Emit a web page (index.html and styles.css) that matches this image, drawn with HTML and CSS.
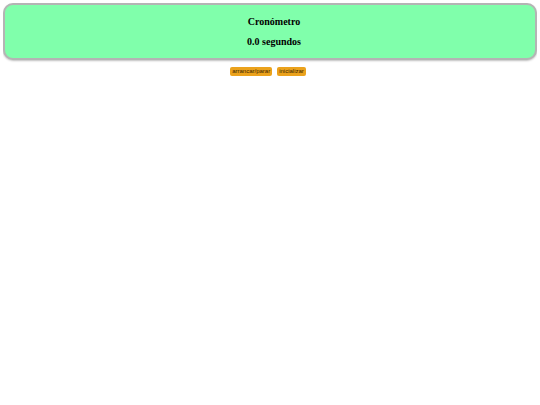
FILE: index.html
```html
<!DOCTYPE html>
<html lang="es">
<head>
  <meta charset="UTF-8">
  <title>Cronómetro</title>
  <link rel="stylesheet" href="styles.css">
</head>
<body>
  <div class="panel">
    <h1>Cronómetro</h1>
    <p id="tiempo">0.0 segundos</p>
  </div>
  <div class="controles">
    <button id="arrancar">arrancar/parar</button>
    <button id="inicializar">inicializar</button>
  </div>
  <script>
    (function() {
      const salida = document.getElementById('tiempo');
      let decimas = 0;
      let reloj = null;

      function pintar() {
        salida.textContent = (decimas / 10).toFixed(1) + ' segundos';
      }

      document.getElementById('arrancar').addEventListener('click', function() {
        if (reloj) {
          clearInterval(reloj);
          reloj = null;
        } else {
          reloj = setInterval(function() { decimas++; pintar(); }, 100);
        }
      });

      document.getElementById('inicializar').addEventListener('click', function() {
        decimas = 0;
        pintar();
      });
    })();
  </script>
</body>
</html>
```

FILE: styles.css
```css
body {
  margin: 3px;
  font-family: "Liberation Serif", serif;
}
.panel {
  background: #80ffab;
  border: 2px solid #b4b4b4;
  border-radius: 10px;
  box-shadow: 0 1px 2px rgba(0, 0, 0, 0.25);
  text-align: center;
  padding: 7px 0 6px 8px;
}
.panel h1,
.panel p {
  font-size: 10px;
  font-weight: bold;
  margin: 0;
  line-height: 20px;
}
.controles {
  display: flex;
  justify-content: center;
  gap: 5px;
  margin-top: 7px;
  padding-right: 4px;
}
button {
  font-family: "Liberation Sans", sans-serif;
  font-size: 6px;
  line-height: 9px;
  color: #3a2400;
  background: #eba21c;
  border: 0;
  border-radius: 2px;
  padding: 0 2px;
}
```
